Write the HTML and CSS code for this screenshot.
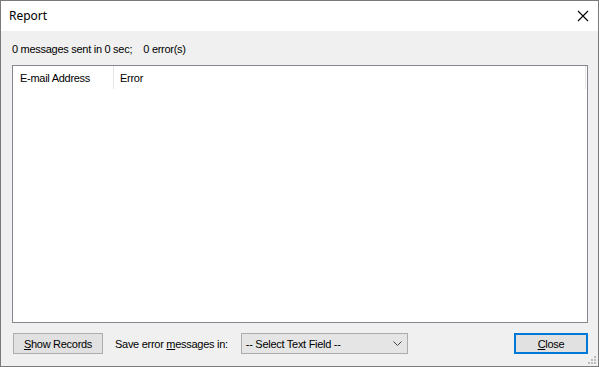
FILE: index.html
```html
<!DOCTYPE html>
<html>
<head>
<meta charset="utf-8">
<link rel="stylesheet" href="styles.css">
</head>
<body>
<div class="window">
  <div class="titlebar">
    <span class="title">Report</span>
    <svg class="close-x" width="12" height="12" viewBox="0 0 12 12"><path d="M1 1 L11 11 M11 1 L1 11" stroke="#000" stroke-width="1.1" fill="none"/></svg>
  </div>
  <div class="content">
    <div class="status">0 messages sent in 0 sec;&nbsp;&nbsp;&nbsp; 0 error(s)</div>
    <div class="listbox">
      <div class="header">
        <div class="col col1">E-mail Address</div>
        <div class="col col2">Error</div>
        <div class="col col3"></div>
      </div>
    </div>
    <div class="bottom">
      <button class="btn btn-show"><u>S</u>how Records</button>
      <span class="label">Save error <u>m</u>essages in:</span>
      <div class="select">
        <span>-- Select Text Field --</span>
        <svg width="9" height="6" viewBox="0 0 9 6"><path d="M0.5 0.5 L4.5 4.5 L8.5 0.5" stroke="#444" stroke-width="1" fill="none"/></svg>
      </div>
      <div class="spacer"></div>
      <button class="btn btn-close"><u>C</u>lose</button>
    </div>
    <svg class="grip" width="8" height="8" viewBox="0 0 8 8">
      <rect x="6" y="0" width="2" height="2" fill="#bcbcbc"/>
      <rect x="3" y="3" width="2" height="2" fill="#bcbcbc"/>
      <rect x="6" y="3" width="2" height="2" fill="#bcbcbc"/>
      <rect x="0" y="6" width="2" height="2" fill="#bcbcbc"/>
      <rect x="3" y="6" width="2" height="2" fill="#bcbcbc"/>
      <rect x="6" y="6" width="2" height="2" fill="#bcbcbc"/>
    </svg>
  </div>
</div>
</body>
</html>
```
FILE: styles.css
```css
* { box-sizing: border-box; }
html, body { margin: 0; padding: 0; background: #f0f0f0; }
.window {
  width: 599px;
  height: 367px;
  border: 1px solid #7a7a7a;
  background: #f0f0f0;
  display: flex;
  flex-direction: column;
  font-family: "Liberation Sans", Arial, sans-serif;
  font-size: 11px;
  letter-spacing: -0.28px;
  color: #000;
}
.titlebar {
  height: 30px;
  background: #fff;
  display: flex;
  align-items: center;
  padding-left: 8px;
  padding-right: 8px;
}
.title {
  font-family: "Noto Sans", "Open Sans", sans-serif;
  font-size: 12px;
  letter-spacing: 0;
  flex: 1;
  padding-bottom: 1px;
}
.close-x { margin-right: 1px; }
.content {
  flex: 1;
  position: relative;
  padding: 12px 10px 0 11px;
  display: flex;
  flex-direction: column;
}
.status {
  height: 13px;
  line-height: 13px;
  margin-bottom: 9px;
  white-space: pre;
}
.listbox {
  height: 258px;
  border: 1px solid #828790;
  background: #fff;
}
.header {
  display: flex;
  height: 23px;
}
.col {
  height: 23px;
  line-height: 25px;
}
.col1 {
  width: 101px;
  padding-left: 7px;
  border-right: 1px solid #e5e5e5;
}
.col2 {
  flex: 1;
  padding-left: 6px;
}
.col3 {
  width: 2px;
  border-left: 1px solid #e5e5e5;
}
.bottom {
  margin-top: 10px;
  display: flex;
  align-items: center;
  height: 21px;
}
.btn {
  font-family: "Liberation Sans", Arial, sans-serif;
  font-size: 11px;
  letter-spacing: -0.28px;
  color: #000;
  background: #e1e1e1;
  border: 1px solid #adadad;
  height: 21px;
  padding: 0;
  margin: 0;
}
.btn-show {
  width: 90px;
  margin-left: 1px;
}
.label {
  margin-left: 12px;
}
.select {
  margin-left: 13px;
  width: 167px;
  height: 21px;
  background: #e5e5e5;
  border: 1px solid #acacac;
  display: flex;
  align-items: center;
  justify-content: space-between;
  padding-left: 4px;
  padding-right: 5px;
}
.spacer { flex: 1; }
.btn-close {
  width: 74px;
  border: 2px solid #0078d7;
}
.grip {
  position: absolute;
  right: 2px;
  bottom: 2px;
}
```
